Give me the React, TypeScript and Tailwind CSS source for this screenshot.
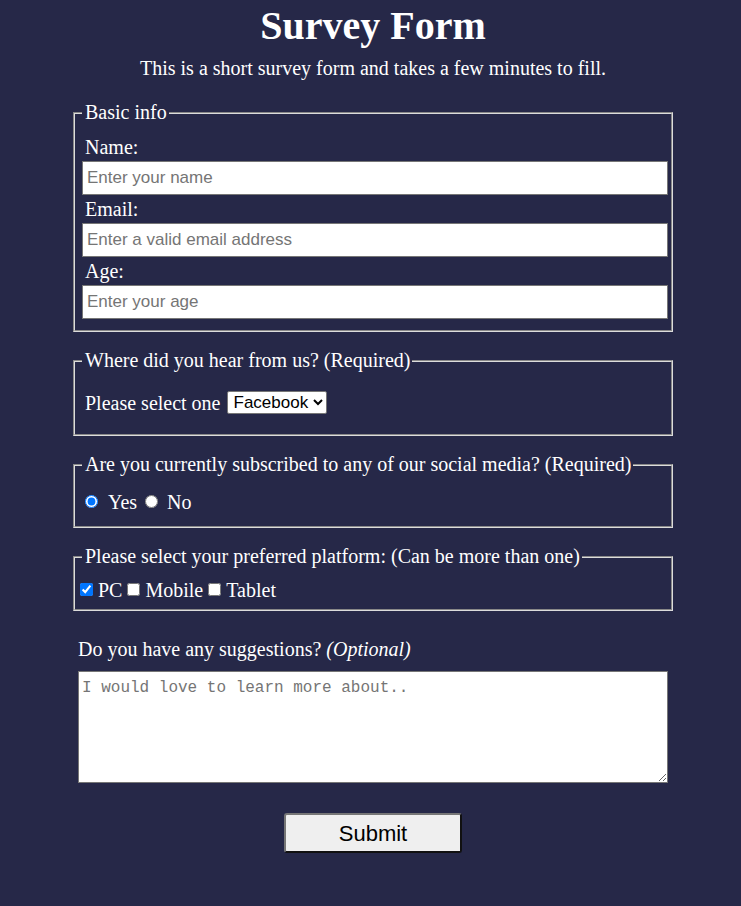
import React from "react";

const fieldsetClass =
    "border-2 [border-style:groove] border-[#dcdcdc] pl-[7px] pr-[3px]";
const legendClass = "pl-[3px] pr-[2px] leading-[23px]";
const labelClass = "block pl-[3px] mt-[3px] mb-[2px] leading-[23px]";
const inputClass =
    "block w-full h-[34px] bg-white text-black border border-[#767676] px-[4px] text-[17px] font-['Liberation_Sans',Arial,sans-serif] placeholder:text-[#757575]";

const App = () => {
    return (
        <div className="min-h-screen bg-[#262848] text-white font-['Liberation_Serif','Times_New_Roman',serif] text-[20px]">
            <div className="w-[605px] mx-auto pl-[5px] pt-[3px] pb-[53px]">
                <h1 className="text-center text-[40px] leading-[46px] font-bold">
                    Survey Form
                </h1>
                <p className="text-center mt-[8px] leading-[23px]">
                    This is a short survey form and takes a few minutes to fill.
                </p>

                <form className="mt-[21px]">
                    <fieldset className={`${fieldsetClass} pt-[9px] pb-[11px]`}>
                        <legend className={legendClass}>Basic info</legend>
                        <label className={labelClass} htmlFor="name">
                            Name:
                        </label>
                        <input
                            id="name"
                            type="text"
                            className={inputClass}
                            placeholder="Enter your name"
                        />
                        <label className={labelClass} htmlFor="email">
                            Email:
                        </label>
                        <input
                            id="email"
                            type="email"
                            className={inputClass}
                            placeholder="Enter a valid email address"
                        />
                        <label className={labelClass} htmlFor="age">
                            Age:
                        </label>
                        <input
                            id="age"
                            type="number"
                            className={inputClass}
                            placeholder="Enter your age"
                        />
                    </fieldset>

                    <fieldset
                        className={`${fieldsetClass} mt-[17px] pt-[19px] pb-[20px]`}
                    >
                        <legend className={legendClass}>
                            Where did you hear from us? (Required)
                        </legend>
                        <div className="flex items-center h-[23px] pl-[3px]">
                            <label htmlFor="source">Please select one</label>
                            <select
                                id="source"
                                defaultValue="facebook"
                                className="ml-[6px] h-[23px] bg-white text-black border border-[#767676] rounded-[2px] pl-[2px] text-[17px] font-['Liberation_Sans',Arial,sans-serif]"
                            >
                                <option value="facebook">Facebook</option>
                                <option value="instagram">Instagram</option>
                                <option value="twitter">Twitter</option>
                                <option value="friend">A friend</option>
                            </select>
                        </div>
                    </fieldset>

                    <fieldset
                        className={`${fieldsetClass} mt-[17px] pt-[14px] pb-[13px]`}
                    >
                        <legend className={legendClass}>
                            Are you currently subscribed to any of our social
                            media? (Required)
                        </legend>
                        <div className="flex items-center h-[23px]">
                            <input
                                id="yes"
                                type="radio"
                                name="subscribed"
                                defaultChecked
                                className="ml-[3px] w-[13px] h-[13px]"
                            />
                            <label htmlFor="yes" className="ml-[10px]">
                                Yes
                            </label>
                            <input
                                id="no"
                                type="radio"
                                name="subscribed"
                                className="ml-[8px] w-[13px] h-[13px]"
                            />
                            <label htmlFor="no" className="ml-[9px]">
                                No
                            </label>
                        </div>
                    </fieldset>

                    <fieldset
                        className={`${fieldsetClass} mt-[17px] pt-[10px] pb-[8px]`}
                    >
                        <legend className={legendClass}>
                            Please select your preferred platform: (Can be more
                            than one)
                        </legend>
                        <div className="flex items-center gap-[5px] h-[23px] -ml-[2px]">
                            <input
                                id="pc"
                                type="checkbox"
                                defaultChecked
                                className="w-[13px] h-[13px]"
                            />
                            <label htmlFor="pc">PC</label>
                            <input
                                id="mobile"
                                type="checkbox"
                                className="w-[13px] h-[13px]"
                            />
                            <label htmlFor="mobile">Mobile</label>
                            <input
                                id="tablet"
                                type="checkbox"
                                className="w-[13px] h-[13px]"
                            />
                            <label htmlFor="tablet">Tablet</label>
                        </div>
                    </fieldset>

                    <div className="px-[5px]">
                        <label
                            htmlFor="suggestions"
                            className="block mt-[27px] leading-[23px]"
                        >
                            Do you have any suggestions? <i>(Optional)</i>
                        </label>
                        <textarea
                            id="suggestions"
                            className="block mt-[10px] w-full h-[112px] bg-white text-black border border-[#767676] px-[3px] pt-[7px] pb-[2px] text-[16px] leading-[19px] font-['Liberation_Mono','DejaVu_Sans_Mono',monospace] placeholder:text-[#757575]"
                            placeholder="I would love to learn more about.."
                        />
                    </div>

                    <div className="flex justify-center mt-[30px]">
                        <button
                            type="submit"
                            className="w-[178px] h-[40px] bg-[#efefef] text-black text-[22px] font-['Liberation_Sans',Arial,sans-serif] rounded-[3px] border-2 border-t-[#767676] border-l-[#767676] border-r-[#111111] border-b-[#111111]"
                        >
                            Submit
                        </button>
                    </div>
                </form>
            </div>
        </div>
    );
};

export default App;
